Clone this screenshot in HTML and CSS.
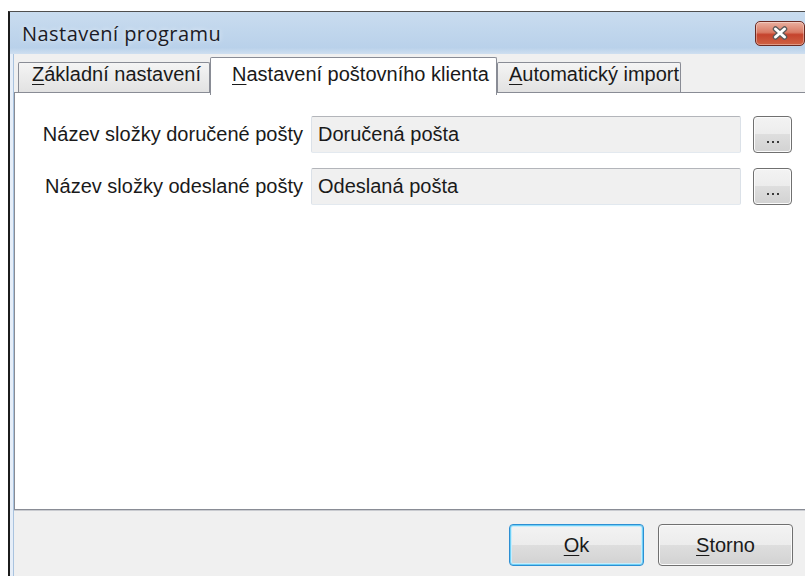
FILE: index.html
```html
<!DOCTYPE html>
<html lang="cs">
<head>
<meta charset="utf-8">
<title>Nastavení programu</title>
<link rel="stylesheet" href="styles.css">
</head>
<body>
<div class="window">
  <div class="titlebar">
    <span class="title">Nastavení programu</span>
    <button class="close" type="button" aria-label="Zavřít">
      <svg width="18" height="14" viewBox="0 0 18 14">
        <path d="M4.5 3 L13.5 11 M13.5 3 L4.5 11" stroke="#5a5a5a" stroke-width="5.5" stroke-linecap="round" fill="none"/>
        <path d="M4.5 3 L13.5 11 M13.5 3 L4.5 11" stroke="#ffffff" stroke-width="3" stroke-linecap="round" fill="none"/>
      </svg>
    </button>
  </div>
  <div class="client">
    <div class="tabs">
      <div class="tab tab-basic"><u>Z</u>ákladní nastavení</div>
      <div class="tab tab-mail"><u>N</u>astavení poštovního klienta</div>
      <div class="tab tab-import"><u>A</u>utomatický import</div>
    </div>
    <div class="panel">
      <div class="row">
        <span class="label">Název složky doručené pošty</span>
        <div class="field">Doručená pošta</div>
        <button class="browse" type="button"><span class="dots"><i></i><i></i><i></i></span></button>
      </div>
      <div class="row">
        <span class="label">Název složky odeslané pošty</span>
        <div class="field">Odeslaná pošta</div>
        <button class="browse" type="button"><span class="dots"><i></i><i></i><i></i></span></button>
      </div>
    </div>
    <div class="footer">
      <button class="btn btn-default" type="button"><u>O</u>k</button>
      <button class="btn" type="button"><u>S</u>torno</button>
    </div>
  </div>
</div>
</body>
</html>
```
FILE: styles.css
```css
* {
  box-sizing: border-box;
}

html,
body {
  margin: 0;
  padding: 0;
  overflow: hidden;
}

body {
  width: 805px;
  height: 576px;
  background: #ffffff;
  font-family: "Liberation Sans", Arial, sans-serif;
  font-size: 20px;
  color: #1a1a1a;
}

button {
  font: inherit;
  color: inherit;
  margin: 0;
  cursor: default;
}

u {
  text-decoration-thickness: 1px;
  text-underline-offset: 3px;
}

/* dialog frame */
.window {
  margin: 11px 0 0 8px;
  width: 797px;
  height: 566px;
  border-top: 1px solid #4f4f4f;
  border-left: 2px solid #1c1c1c;
  background: #e6eef8;
  display: flex;
  flex-direction: column;
}

.titlebar {
  flex: none;
  height: 42px;
  display: flex;
  align-items: center;
  justify-content: space-between;
  padding-left: 12px;
  background: linear-gradient(#c9dcef, #b9d1ea 85%, #cfdff0);
}

.title {
  font-family: "Open Sans", "Noto Sans", sans-serif;
  font-size: 20px;
  letter-spacing: 0.45px;
  color: #1b1b26;
  text-shadow: 0 0 5px rgba(255, 255, 255, 0.7);
}

.close {
  width: 50px;
  height: 25px;
  padding: 0;
  display: flex;
  align-items: center;
  justify-content: center;
  border: 1px solid #6b2a22;
  border-radius: 5px;
  background: linear-gradient(#eab0a0 0%, #d97a64 45%, #c5432d 55%, #cf6244 100%);
  box-shadow: inset 0 0 0 1px rgba(255, 255, 255, 0.35);
}

/* client area */
.client {
  flex: 1;
  display: flex;
  flex-direction: column;
  margin-left: 3px;
  border-left: 1px solid #a9c3df;
  background: #f0f0f0;
}

.tabs {
  flex: none;
  height: 38px;
  padding: 3px 0 0 4px;
  display: flex;
  align-items: flex-end;
  position: relative;
  z-index: 1;
}

.tab {
  height: 30px;
  line-height: 23px;
  white-space: nowrap;
  border: 1px solid #898c95;
  border-bottom: none;
  border-radius: 2px 2px 0 0;
  background: linear-gradient(#f4f4f4, #e2e2e2);
}

.tab-basic {
  width: 192px;
  padding-left: 13px;
}

.tab-mail {
  width: 287px;
  height: 38px;
  margin-bottom: -3px;
  padding: 5px 0 0 21px;
  background: #ffffff;
}

.tab-import {
  width: 184px;
  padding-left: 11px;
}

.panel {
  flex: none;
  height: 418px;
  padding-top: 23px;
  background: #ffffff;
  border: 1px solid #898c95;
  border-right: none;
  box-shadow: 0 1px 0 #c9cbd0;
}

.row {
  display: flex;
  align-items: center;
  height: 37px;
  line-height: 23px;
}

.row + .row {
  margin-top: 15px;
}

.label {
  width: 288px;
  text-align: right;
  white-space: nowrap;
}

.field {
  width: 430px;
  height: 37px;
  margin-left: 8px;
  padding: 6px 0 0 6px;
  background: #f0f0f0;
  border: 1px solid;
  border-color: #b3b5ba #dbe1e8 #e3e9ef #dbe1e8;
  border-radius: 2px;
  white-space: nowrap;
}

.browse {
  width: 39px;
  height: 37px;
  margin-left: 12px;
  padding: 0 0 9px;
  display: flex;
  align-items: flex-end;
  justify-content: center;
  border: 1px solid #707070;
  border-radius: 4px;
  background: linear-gradient(#f3f3f3 0%, #ececec 50%, #dedede 50%, #d2d2d2 100%);
  box-shadow: inset 0 0 0 1px #fbfbfb;
}

/* the three dots of the browse button */
.dots {
  display: flex;
  gap: 3px;
}

.dots i {
  width: 2px;
  height: 2px;
  background: #3a3a3a;
}

.footer {
  flex: 1;
  display: flex;
  justify-content: flex-end;
  align-items: flex-start;
  gap: 14px;
  padding: 14px 12px 0 0;
}

.btn {
  width: 135px;
  height: 42px;
  padding: 0;
  line-height: 23px;
  border: 1px solid #707070;
  border-radius: 4px;
  background: linear-gradient(#f3f3f3 0%, #ececec 50%, #dedede 50%, #d2d2d2 100%);
  box-shadow: inset 0 0 0 1px #fbfbfb;
}

.btn-default {
  border-color: #2d8fd3;
  box-shadow: inset 0 0 0 1px #6fd0f6, inset 0 0 0 2px #c9ecfb;
}
```
